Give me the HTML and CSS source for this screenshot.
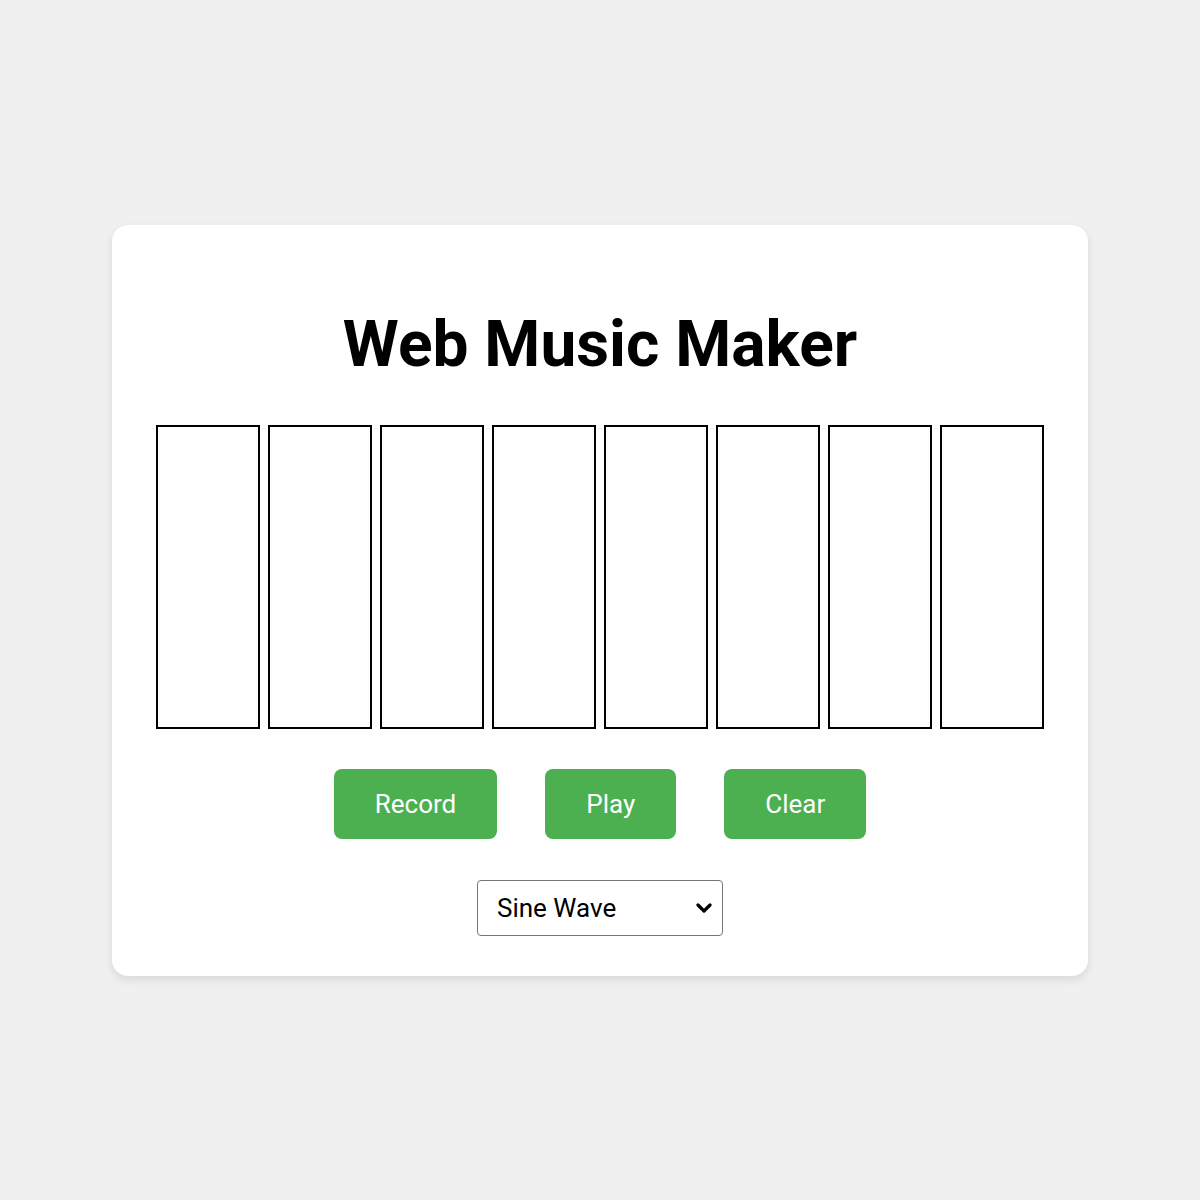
FILE: index.html
```html
<!DOCTYPE html>
<html>
<head>
<meta charset="utf-8">
<title>Web Music Maker</title>
<link rel="stylesheet" href="styles.css">
</head>
<body>
<div class="card">
  <h1 class="title">Web Music Maker</h1>
  <div class="keys">
    <div class="key"></div>
    <div class="key"></div>
    <div class="key"></div>
    <div class="key"></div>
    <div class="key"></div>
    <div class="key"></div>
    <div class="key"></div>
    <div class="key"></div>
  </div>
  <div class="controls">
    <button class="btn">Record</button>
    <button class="btn">Play</button>
    <button class="btn">Clear</button>
  </div>
  <div class="wave-row">
    <div class="select-wrap">
      <select class="wave">
        <option>Sine Wave</option>
        <option>Square Wave</option>
        <option>Sawtooth Wave</option>
        <option>Triangle Wave</option>
      </select>
      <svg class="chev" width="16" height="10" viewBox="0 0 16 10"><path d="M2 2 L8 8 L14 2" fill="none" stroke="#000" stroke-width="3.2" stroke-linecap="round" stroke-linejoin="round"/></svg>
    </div>
  </div>
</div>
</body>
</html>
```
FILE: styles.css
```css
html, body {
  margin: 0;
  padding: 0;
}
body {
  background: #f0f0f0;
  font-family: Roboto, "Liberation Sans", Arial, sans-serif;
  min-height: 1200px;
  display: flex;
  align-items: center;
  justify-content: center;
}
.card {
  width: 896px;
  padding: 40px;
  background: #ffffff;
  border-radius: 16px;
  box-shadow: 0 4px 10px rgba(0, 0, 0, 0.1);
}
.title {
  margin: 42px 0 43px;
  font-size: 64px;
  font-weight: 700;
  text-align: center;
  color: #000;
  line-height: normal;
}
.keys {
  display: flex;
  justify-content: center;
  gap: 8px;
}
.key {
  width: 100px;
  height: 300px;
  border: 2px solid #000;
  background: #fff;
}
.controls {
  display: flex;
  justify-content: center;
  gap: 48px;
  margin-top: 40px;
}
.btn {
  font-family: Roboto, "Liberation Sans", Arial, sans-serif;
  font-size: 26px;
  line-height: 30px;
  padding: 20px 41px;
  border: none;
  border-radius: 8px;
  background: #4caf50;
  color: #fff;
}
.wave-row {
  display: flex;
  justify-content: center;
  margin-top: 41px;
}
.select-wrap {
  position: relative;
  display: flex;
}
.wave {
  appearance: none;
  -webkit-appearance: none;
  font-family: Roboto, "Liberation Sans", Arial, sans-serif;
  font-size: 26px;
  width: 246px;
  height: 56px;
  padding: 0 19px;
  border: 1.5px solid #767676;
  border-radius: 4px;
  background: #fff;
  color: #000;
}
.chev {
  position: absolute;
  right: 11px;
  top: 23px;
  pointer-events: none;
}
```
